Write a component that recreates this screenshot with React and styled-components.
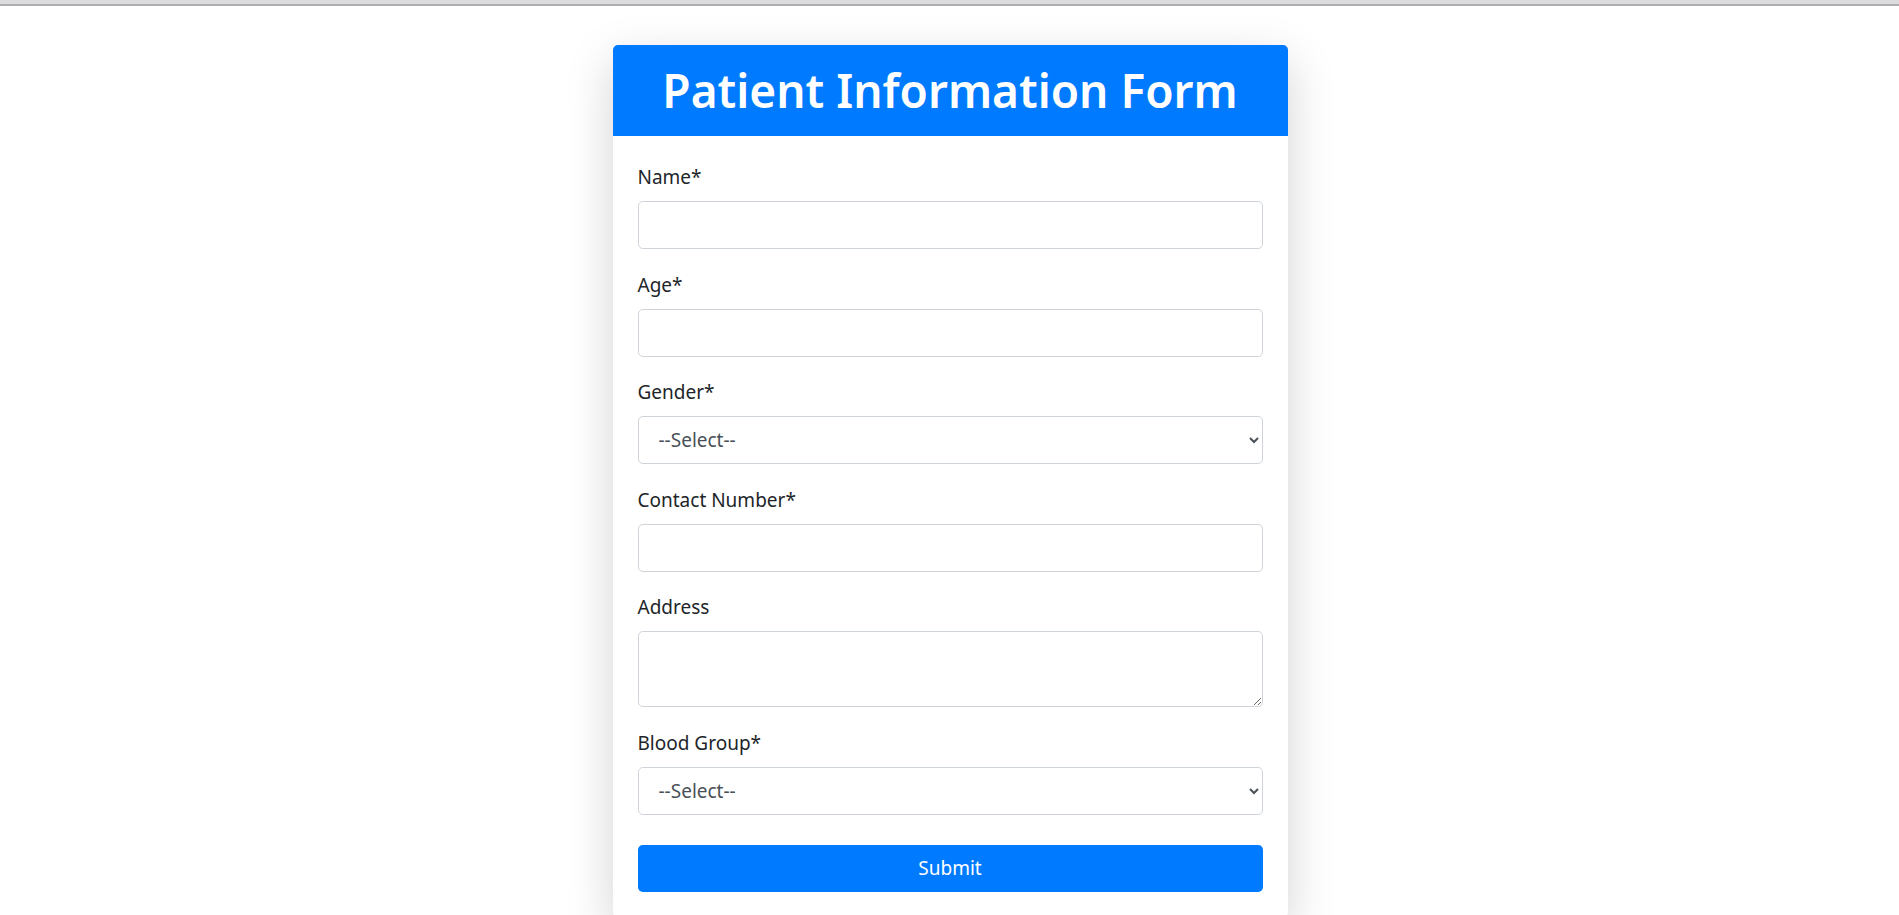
import React from 'react';
import styled, { createGlobalStyle } from 'styled-components';

const GlobalStyle = createGlobalStyle`
  html, body {
    margin: 0;
    padding: 0;
    background: #ffffff;
    font-family: "Noto Sans", "Open Sans", Arial, sans-serif;
    color: #212529;
  }
  * {
    box-sizing: border-box;
  }
`;

const fields = [
  { label: 'Name*', kind: 'input', type: 'text' },
  { label: 'Age*', kind: 'input', type: 'number' },
  { label: 'Gender*', kind: 'select' },
  { label: 'Contact Number*', kind: 'input', type: 'tel' },
  { label: 'Address', kind: 'textarea' },
  { label: 'Blood Group*', kind: 'select' }
];

const TopStrip = styled.div`
  height: 6px;
  background: #dcdcde;
  border-bottom: 2px solid #adadb0;
`;

const Page = styled.div`
  display: flex;
  justify-content: center;
  padding-top: 39px;
  padding-left: 1px;
`;

const Card = styled.div`
  width: 675px;
  background: #ffffff;
  border-radius: 5px;
  box-shadow: 0 1rem 3rem rgba(0, 0, 0, 0.175);
  overflow: hidden;
`;

const Header = styled.div`
  height: 91px;
  background: #007bff;
  display: flex;
  align-items: center;
  justify-content: center;
`;

const Title = styled.h1`
  margin: 0;
  color: #ffffff;
  font-size: 46px;
  font-weight: 600;
  line-height: 1.2;
`;

const Form = styled.form`
  padding: 26px 25px 25px 25px;
`;

const Group = styled.div`
  margin-bottom: 20.5px;
`;

const Label = styled.label`
  display: block;
  font-size: 19px;
  line-height: 30px;
  margin-bottom: 9px;
  color: #212529;
`;

const controlStyles = `
  display: block;
  width: 100%;
  height: 48px;
  padding: 8px 16px;
  font-family: inherit;
  font-size: 19px;
  line-height: 30px;
  color: #495057;
  background: #ffffff;
  border: 1px solid #ced4da;
  border-radius: 4.8px;
  outline: none;
`;

const Input = styled.input`
  ${controlStyles}
`;

const Select = styled.select`
  ${controlStyles}
  padding: 8px 10px 8px 16px;
`;

const TextArea = styled.textarea`
  ${controlStyles}
  height: 76px;
  resize: vertical;
`;

const SubmitButton = styled.button`
  display: block;
  width: 100%;
  height: 47px;
  margin-top: 30px;
  border: none;
  border-radius: 4.8px;
  background: #007bff;
  color: #ffffff;
  font-family: inherit;
  font-size: 19px;
  cursor: pointer;
`;

const Field = ({ label, kind, type }) => (
  <Group>
    <Label>{label}</Label>
    {kind === 'select' && (
      <Select defaultValue="">
        <option value="">--Select--</option>
      </Select>
    )}
    {kind === 'textarea' && <TextArea rows={2} />}
    {kind === 'input' && <Input type={type} />}
  </Group>
);

export default function App() {
  return (
    <>
      <GlobalStyle />
      <TopStrip />
      <Page>
        <Card>
          <Header>
            <Title>Patient Information Form</Title>
          </Header>
          <Form onSubmit={(e) => e.preventDefault()}>
            {fields.map((f) => (
              <Field key={f.label} {...f} />
            ))}
            <SubmitButton type="submit">Submit</SubmitButton>
          </Form>
        </Card>
      </Page>
    </>
  );
}
